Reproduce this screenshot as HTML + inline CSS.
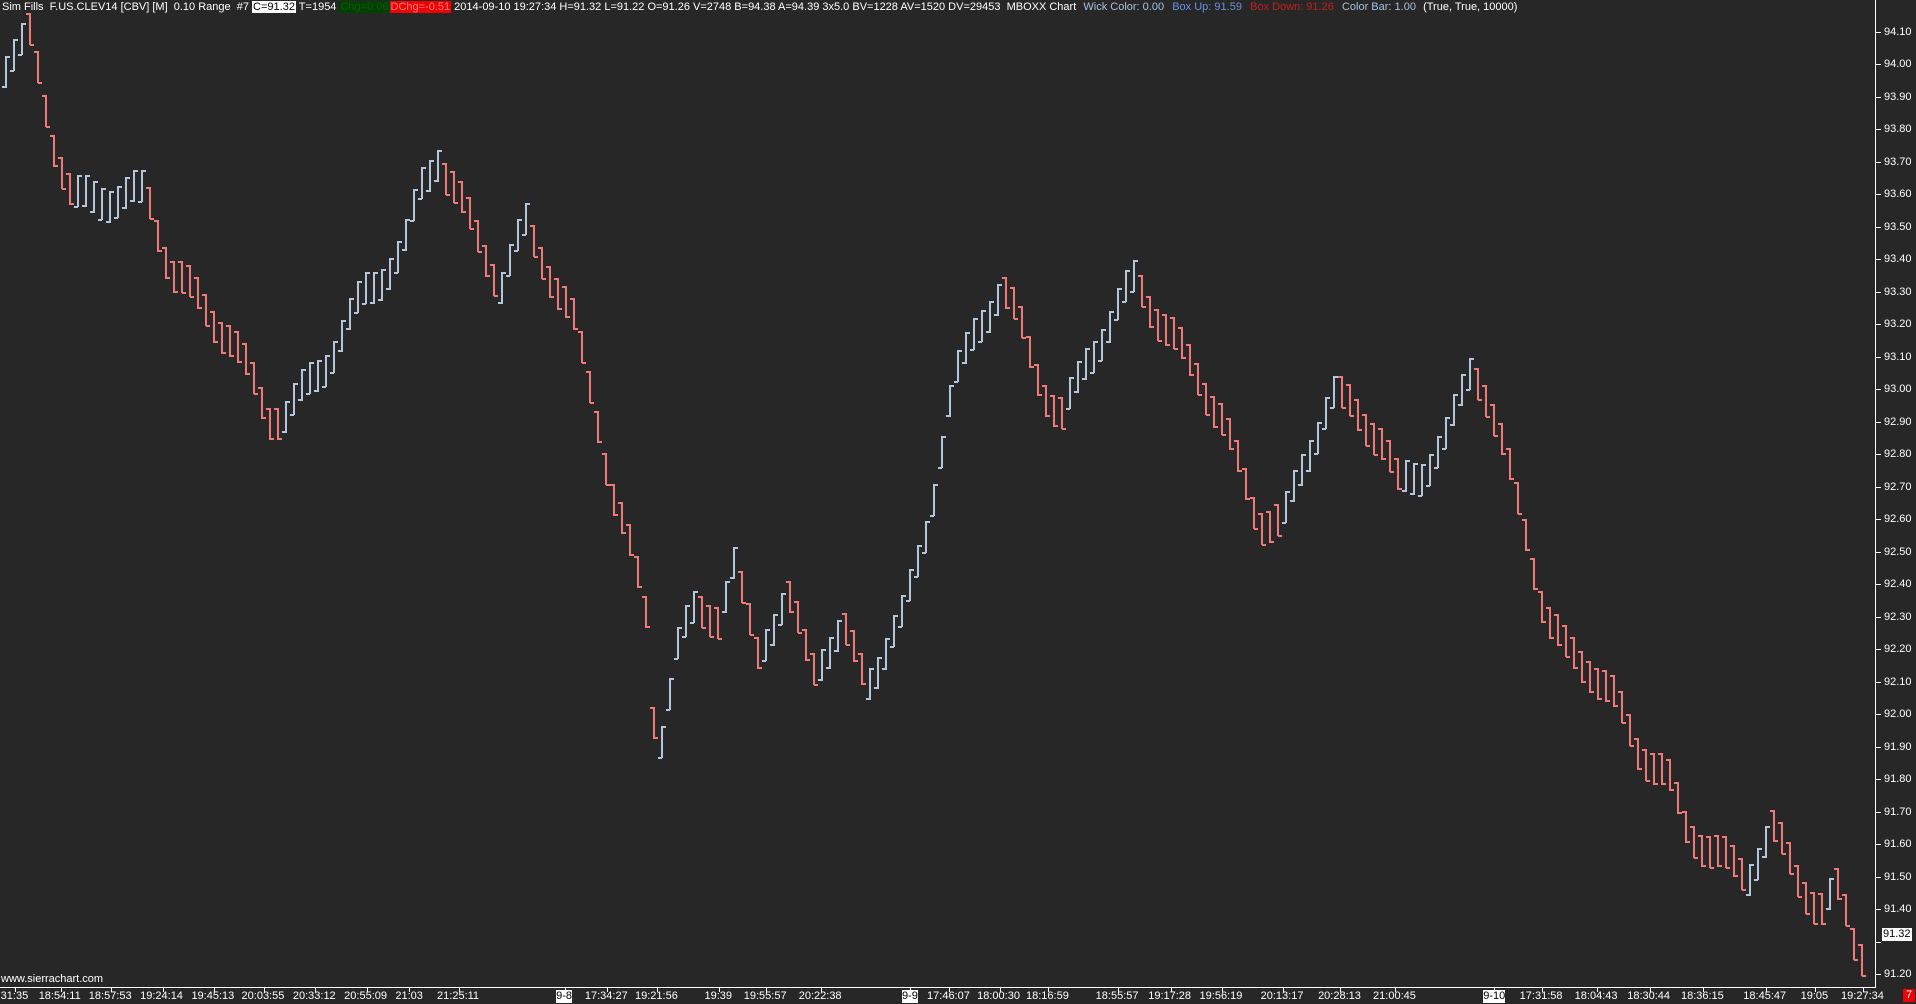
<!DOCTYPE html>
<html><head><meta charset="utf-8"><style>
html,body{margin:0;padding:0;background:#272727;width:1916px;height:1004px;overflow:hidden;font-family:"Liberation Sans",sans-serif;}
#hdr{position:absolute;left:2px;top:0;height:14px;font-size:11px;line-height:14px;color:#fff;white-space:pre;}
#hdr span{padding:0 1px}
.lbl{position:absolute;font-size:11px;color:#fff;line-height:13px;white-space:nowrap}
svg{position:absolute;left:0;top:0}
</style></head><body>
<svg id="s" width="1916" height="1004"></svg>
<div id="hdr">Sim Fills  F.US.CLEV14 [CBV] [M]  0.10 Range  #7 <span style="background:#fff;color:#000">C=91.32</span> T=1954 <span style="background:#004000;color:#0a5a0a">Chg=0.06</span><span style="background:#f00000;color:#ff8080">DChg=-0.51</span> 2014-09-10 19:27:34 H=91.32 L=91.22 O=91.26 V=2748 B=94.38 A=94.39 3x5.0 BV=1228 AV=1520 DV=29453  MBOXX Chart  <span style="color:#a8c0e0">Wick Color: 0.00</span>  <span style="color:#6890e0">Box Up: 91.59</span>  <span style="color:#c02020">Box Down: 91.26</span>  <span style="color:#a8c0e0">Color Bar: 1.00</span>  (True, True, 10000)</div>
<div class="lbl" style="left:1px;top:973px">www.sierrachart.com</div>
<div id="lbls"></div>
<script>
var S=1916/1568,svg=document.getElementById('s'),h='';
function Y(p){return 31.8+(94.10-p)*324.9;}
h+='<line x1="0" y1="987.5" x2="1875" y2="987.5" stroke="#fff" stroke-width="1"/>';
h+='<line x1="1875.5" y1="0" x2="1875.5" y2="988" stroke="#fff" stroke-width="1"/>';
var L='';
for(var k=0;k<=29;k++){var p=94.10-k*0.1,y=Math.round(Y(p));
h+='<line x1="1875" y1="'+(y+.5)+'" x2="1881" y2="'+(y+.5)+'" stroke="#fff"/>';
if(k!=28)L+='<div class="lbl" style="left:1884px;top:'+(y-6)+'px">'+p.toFixed(2)+'</div>';}
L+='<div class="lbl" style="left:1882px;top:928px;background:#fff;color:#000;padding:0 1px">91.32</div>';
L+='<div class="lbl" style="left:1903px;top:989px;background:#f00000;color:#fff;padding:0 3px">7</div>';
var T=[["31:35",12],["18:54:11",50],["18:57:53",91],["19:24:14",133],["19:45:13",175],["20:03:55",216],["20:33:12",258],["20:55:09",300],["21:03",335],["21:25:11",376],["9-8",462,1],["17:34:27",497],["19:21:56",538],["19:39",588],["19:55:57",627],["20:22:38",672],["9-9",745,1],["17:46:07",777],["18:00:30",818],["18:16:59",858],["18:55:57",915],["19:17:28",958],["19:56:19",1000],["20:13:17",1050],["20:28:13",1097],["21:00:45",1142],["9-10",1223,1],["17:31:58",1262],["18:04:43",1307],["18:30:44",1350],["18:36:15",1394],["18:45:47",1445],["19:05",1485],["19:27:34",1525]];
T.forEach(function(t){var x=t[1]*S;h+='<line x1="'+(Math.round(x)+.5)+'" y1="987" x2="'+(Math.round(x)+.5)+'" y2="992" stroke="#fff"/>';
var w=t[0].length*5.6;L+='<div class="lbl" style="left:'+Math.max(0,x-w/2)+'px;top:990px;'+(t[2]?'background:#fff;color:#000;':'')+'">'+t[0]+'</div>';});
document.getElementById('lbls').innerHTML=L;
var K=[[5,94.0],[25,94.08],[45,93.75],[60,93.58],[120,93.6],[140,93.37],[190,93.15],[220,92.92],[235,92.92],[270,93.1],[300,93.3],[330,93.42],[345,93.62],[358,93.72],[380,93.55],[410,93.32],[430,93.5],[445,93.4],[470,93.2],[490,92.9],[500,92.7],[520,92.45],[532,92.27],[537,91.85],[545,92.0],[555,92.2],[570,92.33],[590,92.3],[600,92.45],[620,92.2],[645,92.35],[665,92.15],[690,92.25],[710,92.1],[740,92.3],[760,92.6],[780,93.0],[800,93.2],[820,93.3],[835,93.2],[860,92.95],[870,92.9],[890,93.1],[910,93.2],[930,93.35],[950,93.2],[980,93.05],[1000,92.9],[1020,92.7],[1030,92.6],[1050,92.58],[1070,92.8],[1090,92.98],[1110,92.93],[1130,92.85],[1145,92.7],[1165,92.75],[1185,92.85],[1205,93.08],[1215,93.0],[1235,92.75],[1250,92.55],[1265,92.3],[1280,92.2],[1300,92.15],[1320,92.05],[1340,91.9],[1365,91.8],[1380,91.65],[1410,91.55],[1430,91.5],[1450,91.65],[1470,91.5],[1490,91.4],[1505,91.45],[1520,91.27],[1525,91.27]];
function P(x){for(var i=0;i<K.length-1;i++){if(x<=K[i+1][0]){var a=K[i],b=K[i+1];return a[1]+(b[1]-a[1])*(x-a[0])/(b[0]-a[0]);}}return K[K.length-1][1];}
for(var x=6;x<=1864;x+=8){var xd=x/S,c=P(xd)+0.03*Math.sin(x*0.9),pr=P(xd-4),up=P(xd+3)>pr;
var lo=c-0.05,hi=c+0.05;var o=up?lo:hi,cl=up?hi:lo;
var col=up?'#b4c6de':'#f07a78';
h+='<rect x="'+(x-1)+'" y="'+Y(hi).toFixed(0)+'" width="2" height="32" fill="'+col+'"/>';
h+='<rect x="'+(x-4)+'" y="'+(Y(o)-(up?2:0)).toFixed(0)+'" width="4" height="2" fill="'+col+'"/>';
h+='<rect x="'+(x)+'" y="'+(Y(cl)-(up?0:2)).toFixed(0)+'" width="4" height="2" fill="'+col+'"/>';}
svg.innerHTML=h;
</script>
</body></html>
